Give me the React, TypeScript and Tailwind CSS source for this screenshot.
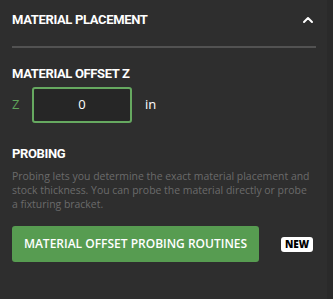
import { ChevronUp } from "lucide-react"

export default function App() {
    return (
        <div className="flex h-[299px] w-[333px] bg-[#2e2e2e] font-['Open_Sans',sans-serif]">

            {/* PANEL */}
            <div className="flex-1 px-3">

                {/* HEADER */}
                <div className="flex h-[40px] items-center justify-between">
                    <h2 className="font-['Roboto',sans-serif] text-[13px] font-bold tracking-[-0.35px] text-white">
                        MATERIAL PLACEMENT
                    </h2>
                    <ChevronUp className="mr-[-1px] h-4 w-4 text-white" strokeWidth={3} />
                </div>
                <div className="mr-[-1px] mt-[6px] h-[2px] bg-[#525252]" />

                {/* OFFSET */}
                <h3 className="mt-[18px] font-['Roboto',sans-serif] text-[13px] font-bold leading-[16px] tracking-[-0.35px] text-white">
                    MATERIAL OFFSET Z
                </h3>
                <div className="mt-[5px] flex items-center">
                    <span className="w-[20px] text-[13px] text-[#5fa55a]">Z</span>
                    <div className="flex h-[36px] w-[100px] items-center justify-center rounded-[3px] border-2 border-[#66a960] bg-[#262626] text-[13px] text-white">
                        0
                    </div>
                    <span className="ml-[13px] text-[13px] text-white">in</span>
                </div>

                {/* PROBING */}
                <h3 className="mt-[23px] font-['Roboto',sans-serif] text-[13px] font-bold leading-[16px] tracking-[-0.35px] text-white">
                    PROBING
                </h3>
                <p className="mt-[7px] pr-[2px] text-[10.45px] leading-[14px] text-[#6b6b6b]">
                    Probing lets you determine the exact material placement and stock thickness. You can probe the material directly or probe a fixturing bracket.
                </p>

                {/* BUTTON */}
                <div className="mt-[15px] flex items-center">
                    <button className="h-[36px] w-[247px] rounded-[3px] bg-[#579c51] text-[12px] font-semibold text-white">
                        MATERIAL OFFSET PROBING ROUTINES
                    </button>
                    <span className="ml-[22px] rounded-[3px] bg-white px-[4px] text-[10px] font-extrabold leading-[15px] text-black">
                        NEW
                    </span>
                </div>
            </div>

            {/* SCROLL STRIP */}
            <div className="w-[6px] bg-[#2a2a2a]" />
        </div>
    )
}
